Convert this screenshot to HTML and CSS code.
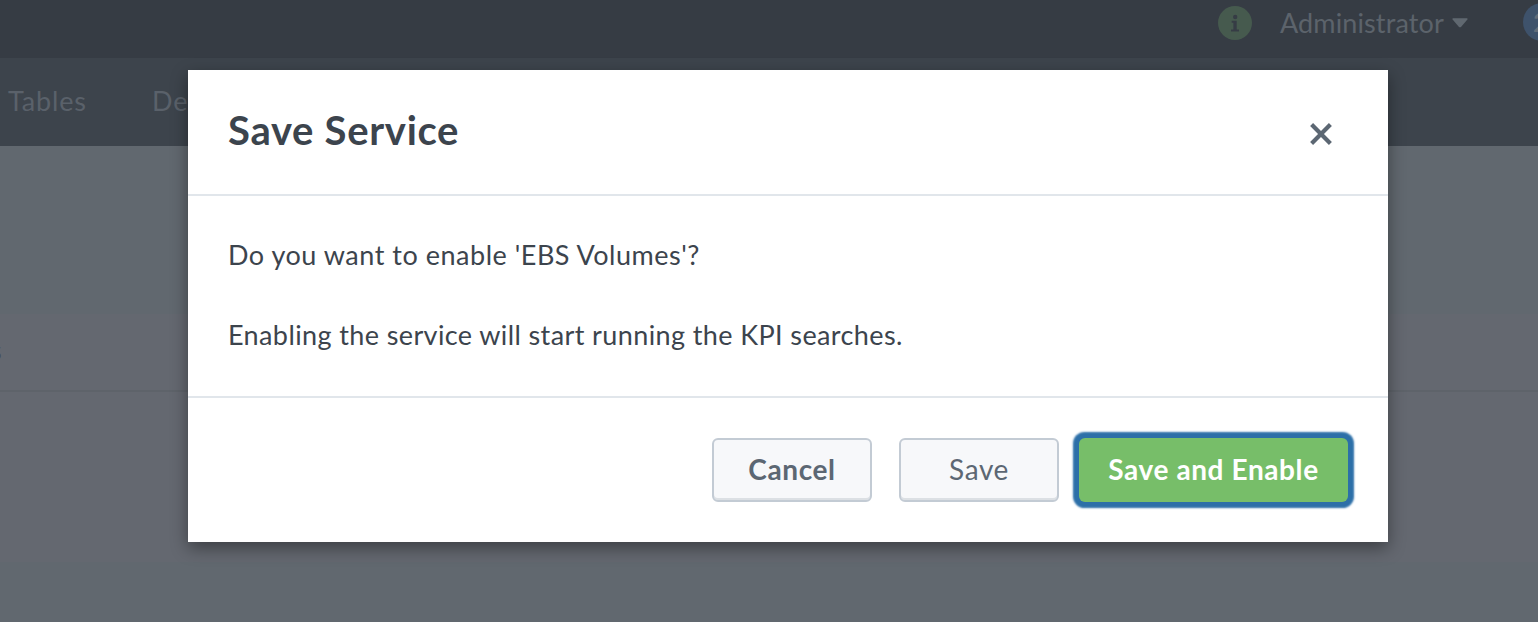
FILE: index.html
```html
<!DOCTYPE html>
<html lang="en">
<head>
<meta charset="utf-8">
<title>Save Service</title>
<link rel="stylesheet" href="styles.css">
</head>
<body>
<div class="page">
  <header class="topbar">
    <svg class="info" viewBox="0 0 34 34" aria-hidden="true"><circle cx="17" cy="17" r="17" fill="#465a4e"/><circle cx="17.2" cy="11" r="2.2" fill="#363c45"/><path d="M13.7 14.8h5v8.7h2.300v1.900h-8v-1.900h2.400v-6.800h-1.700z" fill="#363c45"/></svg>
    <span class="user">Administrator</span>
    <svg class="caret" viewBox="0 0 16 10" aria-hidden="true"><path d="M1.200.200h13.600c.900 0 1.200.800.600 1.400L9 8.900c-.600.600-1.400.600-2 0L.600 1.600C0 1 .300.200 1.200.200z" fill="#606870"/></svg>
    <span class="count">2</span>
  </header>
  <nav class="nav"><span class="tables">Tables</span><span class="dep">De</span></nav>
  <main class="content">
    <div class="band"></div>
    <div class="row"><span class="cut">s</span></div>
    <div class="panel"></div>
  </main>
</div>
<div class="overlay">
  <section class="modal" role="dialog" aria-label="Save Service">
    <div class="head">
      <h1 class="title">Save Service</h1>
      <svg class="close" viewBox="0 0 24 24" aria-hidden="true"><path d="M2.600 2.600l18.800 18.800M21.400 2.600L2.600 21.400" stroke="#5c6773" stroke-width="4.200"/></svg>
    </div>
    <div class="body">
      <p class="line ask">Do you want to enable 'EBS Volumes'?</p>
      <p class="line note">Enabling the service will start running the KPI searches.</p>
    </div>
    <div class="foot">
      <button class="btn cancel">Cancel</button>
      <button class="btn save">Save</button>
      <button class="btn primary">Save and Enable</button>
    </div>
  </section>
</div>
</body>
</html>
```
FILE: styles.css
```css
* { box-sizing: border-box; }
body { margin: 0; width: 1538px; height: 622px; overflow: hidden; font-family: Lato, "Open Sans", sans-serif; font-size: 27px; line-height: 40px; }
.page { width: 1538px; height: 622px; display: flex; flex-direction: column; overflow: hidden; background: #61686f; color: #5a616a; }
.topbar { height: 58px; flex: none; background: #363c44; display: flex; align-items: flex-start; padding: 3px 0 0 1218px; color: #5c636b; }
.info { width: 34px; height: 34px; margin: 3px 28px 0 0; flex: none; }
.user { width: 165px; white-space: nowrap; letter-spacing: .12px; }
.caret { width: 16px; height: 10px; margin: 15px 0 0 7px; flex: none; }
.count { flex: none; width: 38px; height: 38px; margin: 0 0 0 55px; padding-left: 10px; border-radius: 50%; background: #3e526b; color: #626c79; line-height: 38px; font-weight: 700; }
.user + .caret { margin-left: 8px; }
.nav { height: 88px; flex: none; background: #3d444c; padding: 23px 0 0 8px; display: flex; white-space: nowrap; letter-spacing: .85px; }
.tables { width: 144px; }
.content { flex: 1; }
.band { height: 168px; }
.row { height: 78px; background: #646870; border-bottom: 2px solid #5e636a; padding-top: 16px; color: #454c55; }
.cut { display: block; margin-left: -10px; }
.panel { height: 170px; background: #646870; }
.overlay { position: absolute; left: 0; top: 0; width: 1538px; height: 622px; padding: 70px 150px 0 188px; }
.modal { width: 1200px; height: 472px; background: #fff; box-shadow: 0 6px 16px rgba(0,0,0,.4); color: #3c444d; display: flex; flex-direction: column; }
.head { height: 126px; border-bottom: 2px solid #e1e6eb; display: flex; justify-content: space-between; padding: 35px 55px 0 40px; }
.title { margin: 0; font-size: 40px; font-weight: 700; line-height: 50px; white-space: nowrap; letter-spacing: .7px; }
.close { width: 24px; height: 24px; margin-top: 17px; }
.body { height: 202px; border-bottom: 2px solid #e1e6eb; padding: 39px 40px 0; }
.line { margin: 0 0 40px; width: max-content; white-space: nowrap; }
.ask { letter-spacing: .52px; }
.note { letter-spacing: .39px; }
.foot { display: flex; padding: 40px 0 0 524px; }
.btn { width: 160px; height: 64px; margin: 0 27px 0 0; padding: 0 0 3px; border: 2px solid #c3cbd4; border-radius: 6px; background: #f7f8fa; box-shadow: inset 0 -2px 0 #dce0e4; color: #5c6773; font: 400 28px/40px Lato, "Open Sans", sans-serif; letter-spacing: .6px; white-space: nowrap; }
.cancel { font-weight: 700; }
.save { margin-right: 20px; }
.primary { width: 269px; margin: 0; border: 0; color: #fff; background: #77be69; font-weight: 700; box-shadow: 0 0 2px 5.500px #2c6fa8; }
```
